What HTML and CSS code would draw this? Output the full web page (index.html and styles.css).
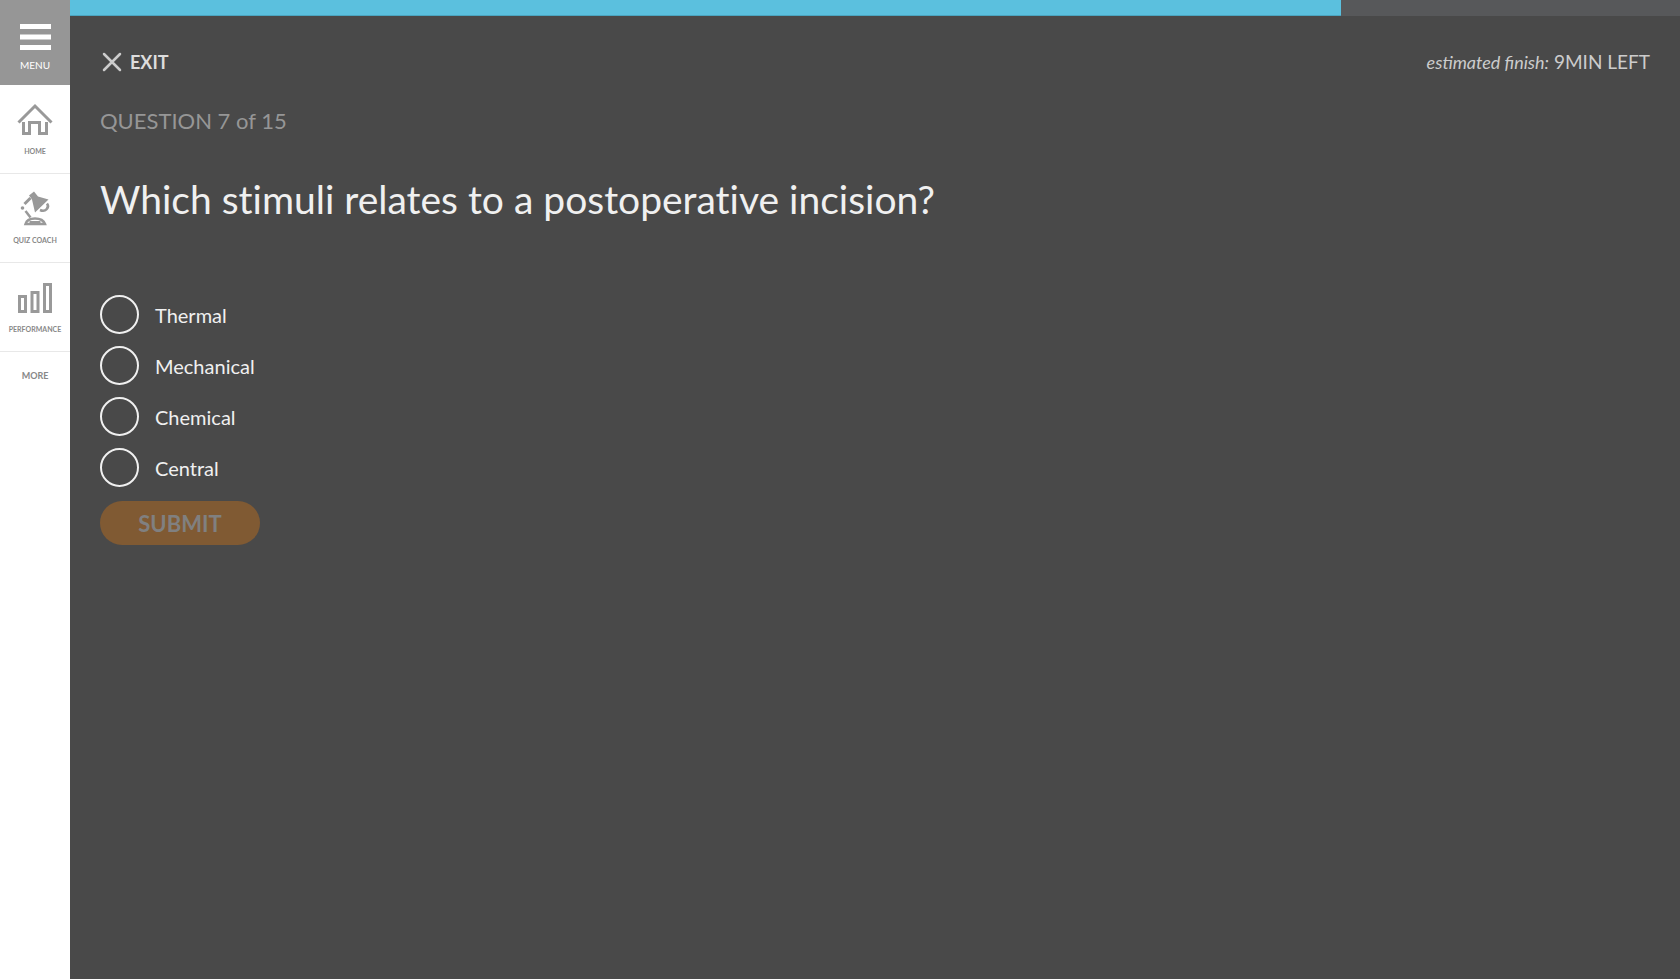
FILE: index.html
```html
<!DOCTYPE html>
<html lang="en">
<head>
<meta charset="utf-8">
<title>Quiz</title>
<link rel="stylesheet" href="styles.css">
</head>
<body>
<div class="app">
  <nav class="sidebar">
    <button class="menu" type="button">
      <svg width="31" height="27" viewBox="0 0 31 27" fill="#fff" aria-hidden="true"><path d="M0 0h31v5H0zM0 10.500h31v5H0zM0 21h31v5H0z"/></svg>
      <span>MENU</span>
    </button>
    <a class="item" href="#">
      <svg class="icon" viewBox="0 0 36 36" fill="none" stroke="#999" stroke-width="3" aria-hidden="true"><path d="M1.500 20.500 18 4l16.500 16.500"/><path d="M6.500 20v11.500h6v-11h10v11h7V20"/></svg>
      <span>HOME</span>
    </a>
    <a class="item" href="#">
      <svg class="icon" viewBox="0 0 36 36" fill="none" stroke="#999" stroke-width="2.500" aria-hidden="true"><path d="M17 .5l4 5 10.500 3L18 21.500l-3-13-3-4z" fill="#999" stroke="none"/><path d="M13.500 7l-6 6" stroke-width="3"/><circle cx="5.500" cy="17" r="1.800" fill="#999" stroke="none"/><path d="M8.500 20l5 6.500"/><path d="M30 12.500c3 4-1.500 9-7 6.500"/><path d="M8.500 33c1.200-4 4.700-5.500 9.500-5.500s8.500 1.500 10 5.500z"/><path d="M12.500 31h11" stroke-width="2"/></svg>
      <span>QUIZ COACH</span>
    </a>
    <a class="item" href="#">
      <svg class="icon" viewBox="0 0 36 36" fill="none" stroke="#999" stroke-width="3" aria-hidden="true"><path d="M2.500 16.500h6v15h-6zM15 12.500h6v19h-6zM27.500 4.500h6v27h-6z"/></svg>
      <span>PERFORMANCE</span>
    </a>
    <a class="more" href="#">MORE</a>
  </nav>
  <main class="main">
    <div class="progress"><div class="bar" style="width: 78.95%"></div></div>
    <div class="content">
      <header class="top">
        <button class="exit" type="button">
          <svg width="20" height="20" viewBox="0 0 20 20" stroke="#ccc" stroke-width="2.500" stroke-linecap="round" aria-hidden="true"><path d="M2 2l16 16M18 2 2 18"/></svg>
          <span>EXIT</span>
        </button>
        <p class="finish"><em>estimated finish:</em> 9MIN LEFT</p>
      </header>
      <p class="count">QUESTION 7 of 15</p>
      <h1 class="question">Which stimuli relates to a postoperative incision?</h1>
      <form class="answers">
        <label class="answer"><input type="radio" name="answer"><span>Thermal</span></label>
        <label class="answer"><input type="radio" name="answer"><span>Mechanical</span></label>
        <label class="answer"><input type="radio" name="answer"><span>Chemical</span></label>
        <label class="answer"><input type="radio" name="answer"><span>Central</span></label>
        <button class="submit" type="submit" disabled>SUBMIT</button>
      </form>
    </div>
  </main>
</div>
</body>
</html>
```
FILE: styles.css
```css
* { box-sizing: border-box; }
body { margin: 0; font-family: Lato, sans-serif; }
button { border: 0; padding: 0; background: none; font-family: inherit; cursor: pointer; }
a { text-decoration: none; }
p, h1 { margin: 0; font-weight: 400; }

.app { display: flex; min-height: 100vh; background: #494949; }

.sidebar { flex: none; width: 70px; background: #fff; color: #888; }
.menu { display: flex; flex-direction: column; align-items: center; gap: 8px; width: 100%; padding: 24px 0 14px; background: #969696; color: #fff; font-size: 10px; line-height: 12px; }
.item { display: flex; flex-direction: column; align-items: center; gap: 9px; padding: 17px 0 18px; border-bottom: 1px solid #e8e8e8; color: #888; font-size: 7px; line-height: 8px; font-weight: 700; white-space: nowrap; }
.icon { width: 36px; height: 36px; }
.more { display: block; padding: 18px 0; text-align: center; color: #888; font-size: 9px; line-height: 12px; font-weight: 700; }

.main { flex: 1; min-width: 0; }
.progress { height: 16px; background: #57585a; }
.bar { height: 100%; background: #5bc0de; border-bottom: 1px solid #4ba5c0; }
.content { padding: 32px 30px; }
.top { display: flex; align-items: center; justify-content: space-between; line-height: 28px; color: #ccc; }
.exit { display: flex; align-items: center; gap: 8px; padding-left: 2px; color: #ddd; font-size: 18px; font-weight: 700; line-height: 28px; }
.finish { font-size: 19px; }
.finish em { font-size: 18px; }
.count { margin-top: 31px; color: #969696; font-size: 22px; line-height: 28px; }
.question { margin-top: 34px; color: #f0f0f0; font-size: 39px; line-height: 60px; font-variant-ligatures: none; }
.answers { display: flex; flex-direction: column; align-items: flex-start; gap: 12px; margin-top: 66px; }
.answer { display: flex; align-items: center; gap: 16px; color: #f0f0f0; font-size: 20px; line-height: 28px; }
.answer input { appearance: none; width: 39px; height: 39px; margin: 0; border: 2px solid #f0f0f0; border-radius: 50%; }
.answer input:checked { background: #f0f0f0; box-shadow: inset 0 0 0 8px #494949; }
.submit { width: 160px; height: 44px; margin-top: 2px; border-radius: 22px; background: #805a33; color: #808080; font-size: 22px; font-weight: 700; }
```
